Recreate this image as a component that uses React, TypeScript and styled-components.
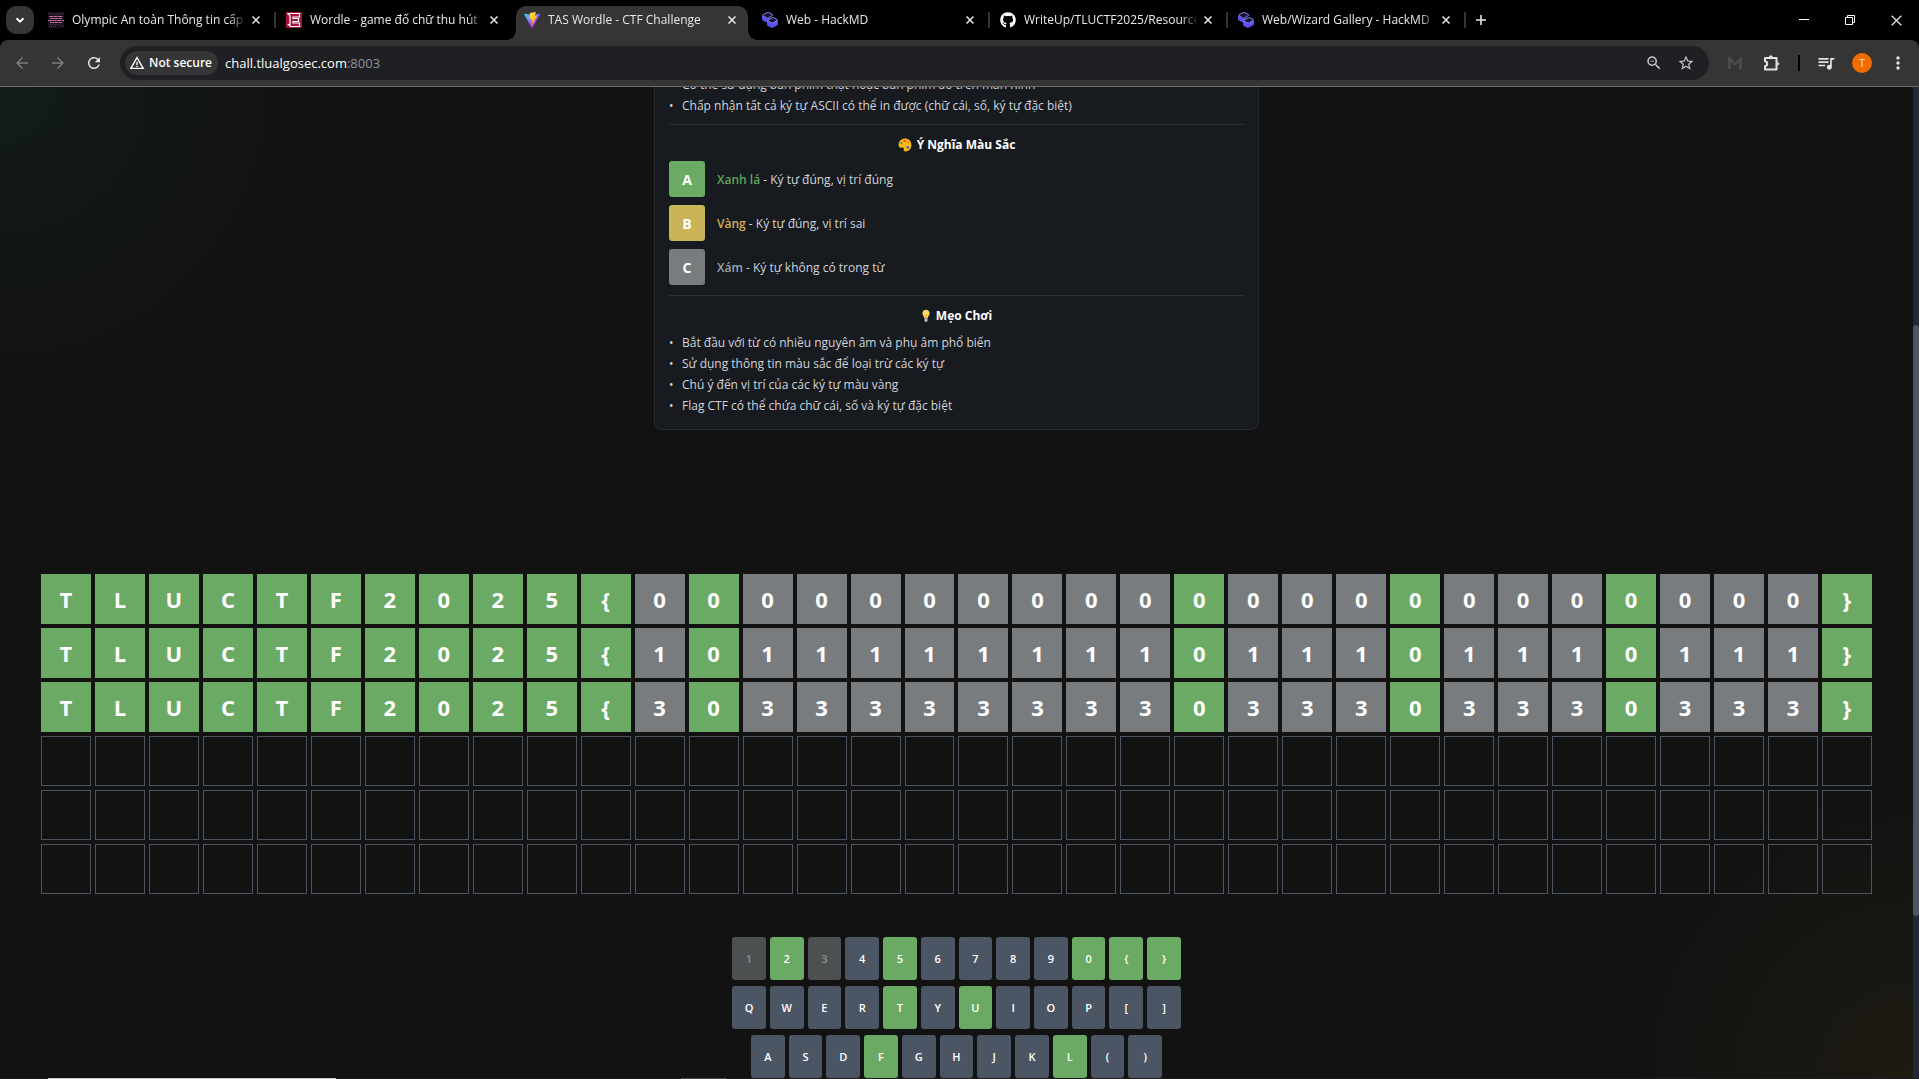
import React from "react";
import styled, { createGlobalStyle } from "styled-components";
import { FaGithub } from "react-icons/fa";
import { MdZoomOut, MdStarBorder, MdQueueMusic, MdMoreVert, MdArrowBack, MdArrowForward, MdRefresh, MdWarningAmber } from "react-icons/md";

const GlobalStyle = createGlobalStyle`
  * { box-sizing: border-box; }
  body { margin: 0; background: #121212; overflow: hidden; }
  button, input { font: inherit; color: inherit; border: 0; padding: 0; margin: 0; background: none; }
  ul { list-style: none; margin: 0; padding: 0; }
  svg { display: block; flex: none; }
`;

const Frame = styled.div`
  height: 100vh;
  display: flex;
  flex-direction: column;
  font-family: "Open Sans", "Noto Sans", sans-serif;
  font-size: 12px;
  line-height: 20px;
  color: #fff;
`;

/* ---------- Tab strip ---------- */
const TabStrip = styled.header`
  display: flex;
  height: 40px;
  flex: none;
  background: #000;
`;
const TabSearch = styled.button`
  width: 28px;
  height: 28px;
  margin: 6px 4px 0 6px;
  border-radius: 10px;
  background: #353535;
  display: grid;
  place-items: center;
`;
const TabList = styled.div`
  display: flex;
`;
const Tab = styled.div<{ $active?: boolean; $divider?: boolean }>`
  position: relative;
  width: 238px;
  height: 40px;
  padding: 0 14px 0 10px;
  display: flex;
  align-items: center;
  ${(p) => p.$active && `
    &::before {
      content: "";
      position: absolute;
      inset: 6px 4px 0 2px;
      border-radius: 10px 10px 0 0;
      background: #353535;
    }
    &::after {
      content: "";
      position: absolute;
      bottom: 0;
      left: -8px;
      right: -6px;
      height: 10px;
      background:
        radial-gradient(circle at 0 0, transparent 10px, #353535 10px) left / 10px 10px no-repeat,
        radial-gradient(circle at 100% 0, transparent 10px, #353535 10px) right / 10px 10px no-repeat;
    }
  `}
  ${(p) => p.$divider && `
    &::after {
      content: "";
      position: absolute;
      right: 0;
      top: 12px;
      width: 2px;
      height: 16px;
      background: #353535;
    }
  `}
  > * { position: relative; z-index: 1; }
`;
const TabTitle = styled.span`
  flex: 1;
  min-width: 0;
  margin: 0 4px 0 8px;
  overflow: hidden;
  white-space: nowrap;
  color: #e8e8e8;
  mask-image: linear-gradient(90deg, #000 158px, transparent 174px);
`;
const TabClose = styled.button`
  width: 12px;
  height: 12px;
  display: grid;
  place-items: center;
`;
const NewTab = styled.button`
  width: 30px;
  height: 40px;
  display: grid;
  place-items: center;
`;
const WindowButtons = styled.div`
  margin-left: auto;
  display: flex;
`;
const WindowButton = styled.button`
  width: 46px;
  height: 40px;
  display: grid;
  place-items: center;
`;

/* ---------- Toolbar ---------- */
const ToolbarBack = styled.div`
  flex: none;
  background: #000;
`;
const Toolbar = styled.nav`
  height: 47px;
  padding: 0 10px 1px 11px;
  display: flex;
  align-items: center;
  background: #353535;
  border-bottom: 1px solid #6b6b6b;
  border-radius: 8px 8px 0 0;
`;
const NavButtons = styled.div`
  display: flex;
  gap: 14px;
  margin-right: 15px;
`;
const IconButton = styled.button<{ $dim?: boolean }>`
  width: 22px;
  height: 22px;
  display: grid;
  place-items: center;
  color: ${(p) => (p.$dim ? "#7d7d7d" : "#e3e3e3")};
`;
const AddressBar = styled.div`
  flex: 1;
  height: 34px;
  padding: 0 12px 0 5px;
  border-radius: 17px;
  background: #1f2024;
  display: flex;
  align-items: center;
  font-size: 13px;
`;
const SecurityChip = styled.button`
  height: 24px;
  padding: 0 6px 0 4px;
  margin-right: 7px;
  border-radius: 12px;
  background: #353535;
  display: flex;
  align-items: center;
  gap: 4px;
  font-size: 12px;
  font-weight: 600;
`;
const UrlField = styled.label`
  flex: 1;
  display: flex;
`;
const UrlInput = styled.input`
  field-sizing: content;
  outline: 0;
  color: #fff;
`;
const UrlPort = styled.span`
  color: #8e9196;
`;
const BarIcons = styled.div`
  display: flex;
  gap: 10px;
`;
const BarIcon = styled(IconButton)`
  color: #c7c7c7;
`;
const ToolbarEnd = styled.div`
  display: flex;
  align-items: center;
  padding-left: 15px;
  gap: 15px;
`;
const ToolbarRule = styled.span`
  width: 2px;
  height: 16px;
  background: #000;
`;
const Avatar = styled.button`
  width: 20px;
  height: 20px;
  border-radius: 50%;
  background: #f26b00;
  color: #ffe0c8;
  font-size: 11px;
  display: grid;
  place-items: center;
`;

/* ---------- Page ---------- */
const Viewport = styled.div`
  flex: 1;
  min-height: 0;
  display: flex;
`;
const Page = styled.main`
  flex: 1;
  min-width: 0;
  overflow: hidden;
  background:
    radial-gradient(circle 300px at 0 0, rgba(34, 197, 94, 0.06), transparent),
    radial-gradient(circle 300px at 100% 100%, rgba(234, 179, 8, 0.05), transparent),
    #121212;
  display: flex;
  flex-direction: column;
  align-items: center;
`;
const ScrollTrack = styled.div`
  width: 6px;
  padding: 238px 0 162px;
  background: #1f2937;
`;
const ScrollThumb = styled.div`
  height: 100%;
  border-radius: 3px;
  background: #4b5563;
`;
const Guide = styled.section`
  width: 605px;
  flex: none;
  margin-top: -13px;
  padding: 0 14px 13px;
  border: 1px solid #242b36;
  border-top: 0;
  border-radius: 0 0 8px 8px;
  background: #171a1f;
  line-height: 21px;
  color: #d1d5db;
`;
const Bullets = styled.ul``;
const Bullet = styled.li`
  display: flex;
  &::before {
    content: "•";
    width: 13px;
    flex: none;
  }
`;
const GuideSection = styled.div<{ $gap: number }>`
  margin-top: ${(p) => p.$gap}px;
  padding-top: 10px;
  border-top: 1px solid #2a303b;
`;
const GuideTitle = styled.h3`
  margin: 0 0 6px;
  display: flex;
  align-items: center;
  justify-content: center;
  gap: 5px;
  font-size: 12px;
  font-weight: 700;
  line-height: 20px;
  color: #fff;
`;
const Legend = styled.div`
  display: grid;
  gap: 8px;
`;
const LegendRow = styled.div`
  display: flex;
  align-items: center;
  gap: 12px;
`;
const Swatch = styled.span<{ $color: string }>`
  width: 36px;
  height: 36px;
  border-radius: 3px;
  background: ${(p) => p.$color};
  color: #fff;
  font-size: 14px;
  font-weight: 700;
  display: grid;
  place-items: center;
`;
const LegendName = styled.span<{ $color: string }>`
  color: ${(p) => p.$color};
  font-weight: 600;
`;
const Board = styled.div`
  align-self: stretch;
  margin: 144px 41px 0;
  flex: none;
  display: grid;
  gap: 4px;
`;
const BoardRow = styled.div`
  display: flex;
  gap: 4px;
`;
const Tile = styled.div<{ $state: TileState }>`
  flex: 1;
  height: 50px;
  display: grid;
  place-items: center;
  font-size: 22px;
  font-weight: 700;
  line-height: 30px;
  ${(p) =>
    p.$state === "empty"
      ? "border: 1px solid #4b5563;"
      : `background: ${p.$state === "hit" ? "#6aaa64" : "#787c7e"};`}
`;
const Keyboard = styled.div`
  width: 449px;
  flex: none;
  margin-top: 43px;
  display: grid;
  gap: 6px;
`;
const KeyRow = styled.div`
  display: flex;
  justify-content: center;
  gap: 4px;
`;
const Key = styled.button<{ $state: KeyState }>`
  width: calc((100% - 44px) / 12);
  height: 43px;
  border-radius: 3px;
  font-size: 11px;
  font-weight: 600;
  background: ${(p) => ({ idle: "#4b5563", hit: "#6aaa64", miss: "#4d5050" })[p.$state]};
  color: ${(p) => (p.$state === "miss" ? "#8f8f8f" : "#fff")};
`;
const Taskbar = styled.footer`
  height: 1px;
  flex: none;
  padding-left: 48px;
  display: flex;
  gap: 345px;
  background: #1c1c1c;
`;
const TaskItem = styled.span<{ $active?: boolean }>`
  width: ${(p) => (p.$active ? 288 : 45)}px;
  background: ${(p) => (p.$active ? "#d0cdca" : "#4a4a4a")};
`;

type TileState = "hit" | "miss" | "empty";
type KeyState = "idle" | "hit" | "miss";

const OlympicIcon = () => (
  <svg width="16" height="16" viewBox="0 0 16 16">
    <rect width="16" height="16" fill="#17121b" />
    <path d="M1 1.500h4M6 2.500h5M12 1.500h3M2 12.500h3M7 12.500h4M12 13.500h3M3 14.500h5" stroke="#4d3a50" strokeDasharray="1 1" />
    <path d="M1 4.500h14M2 6.500h12M0 8.500h16M2 10.500h12" stroke="#c86aa6" strokeWidth="1.200" strokeDasharray="4 .5" />
  </svg>
);
const EIcon = () => (
  <svg width="16" height="16" viewBox="0 0 16 16">
    <rect width="16" height="16" rx="1" fill="#a3133b" />
    <path d="M2 1.500h11.500v3.500H7v1.500h5.500v3H7V11h6.500v3.500H4.500l-2-2h1.500V4z" fill="none" stroke="#fff" strokeWidth="1.200" />
  </svg>
);
const ViteIcon = () => (
  <svg width="16" height="16" viewBox="0 0 256 257">
    <defs>
      <linearGradient id="va" x1="0" x2=".58" y1=".08" y2=".79"><stop stopColor="#41D1FF" /><stop offset="1" stopColor="#BD34FE" /></linearGradient>
      <linearGradient id="vb" x1=".43" x2=".5" y1=".02" y2=".89"><stop stopColor="#FFEA83" /><stop offset=".08" stopColor="#FFDD35" /><stop offset="1" stopColor="#FFA800" /></linearGradient>
    </defs>
    <path fill="url(#va)" d="M255.153 37.938L134.897 252.976c-2.483 4.440-8.862 4.466-11.382.048L.875 37.958c-2.746-4.814 1.371-10.646 6.827-9.670l120.385 21.517a6.537 6.537 0 0 0 2.322-.004l117.867-21.483c5.438-.991 9.574 4.796 6.877 9.620z" />
    <path fill="url(#vb)" d="M185.432.063L96.440 17.501a3.268 3.268 0 0 0-2.634 3.014l-5.474 92.456a3.268 3.268 0 0 0 3.997 3.378l24.777-5.718c2.318-.535 4.413 1.507 3.936 3.838l-7.361 36.047c-.495 2.426 1.782 4.500 4.151 3.780l15.304-4.649c2.372-.720 4.652 1.360 4.150 3.788l-11.698 56.621c-.732 3.542 3.979 5.473 5.943 2.437l1.313-2.028 72.516-144.720c1.215-2.423-.880-5.186-3.540-4.672l-25.505 4.922c-2.396.462-4.435-1.770-3.759-4.114l16.646-57.705c.677-2.350-1.370-4.583-3.769-4.113z" />
  </svg>
);
const HackMdIcon = () => (
  <svg width="16" height="16" viewBox="0 0 16 16">
    <path d="M0 3.500v3.500q0 1 1 1.500l3.500 2 3-1.800V6L4.500 6.500zM5 8.800v4q0 .8.800 1.200l3.400 1.700q.8.300 1.500 0l4.500-2.500q.8-.5.800-1.300V8l-5.500 3z" fill="#5a50f5" />
    <path d="M1 2.700 5 .7q.9-.4 1.800 0l3.600 1.800q1 .5 0 1.100L6.300 5.900q-.8.400-1.600 0L1 3.900q-.9-.6 0-1.200zM6.200 8l4-2.200q.8-.4 1.600 0l3.200 1.600q1 .6 0 1.200l-3.800 2.200q-.8.400-1.600 0L6.200 9.200q-.9-.6 0-1.200z" fill="#15132e" stroke="#8a86ff" strokeWidth="1" />
  </svg>
);
const PuzzleIcon = () => (
  <svg width="18" height="18" viewBox="0 0 18 18" fill="none" stroke="currentColor" strokeWidth="2" strokeLinejoin="round">
    <path d="M2 4h11.500v11.500H2v-3.200c1.300-.2 2.200-1.200 2.200-2.500S3.300 7.500 2 7.300z" />
    <path d="M6 3a1.800 1.800 0 0 1 3.600 0zM14.500 8a1.800 1.800 0 0 1 0 3.600z" fill="currentColor" stroke="none" />
  </svg>
);
const PaletteIcon = () => (
  <svg width="14" height="14" viewBox="0 0 14 14">
    <path d="M7.200.6c3.500 0 6.200 2.700 6.200 6.300s-2.500 6.500-5.800 6.500c-1.700 0-2.300-.9-2-1.900.3-.9.300-1.700-.5-2-.8-.3-1.600.2-2.500.2C1.200 9.700.6 8.500.6 6.800.6 3.200 3.700.6 7.200.6z" fill="#fcb813" />
    <circle cx="3.300" cy="5" r="1.100" fill="#23a34a" />
    <circle cx="6.500" cy="2.900" r="1.100" fill="#e23b2e" />
    <circle cx="10.200" cy="4.400" r="1" fill="#f58220" />
    <circle cx="9.800" cy="9.300" r="1.300" fill="#2f62d9" />
  </svg>
);
const BulbIcon = () => (
  <svg width="10" height="14" viewBox="0 0 10 14">
    <path d="M5 .7c2.100 0 3.600 1.500 3.600 3.500S6.900 7.200 6.600 9.500H3.400C3.100 7.200 1.400 6.200 1.400 4.200S2.900.7 5 .7z" fill="#ffd766" />
    <path d="M3.500 9.500h3v2.300L5.700 13H4.300l-.8-1.200z" fill="#b9bec4" />
    <path d="M4.200 5.500 5 9l.8-3.500" fill="none" stroke="#f0a92c" strokeWidth=".6" />
  </svg>
);
const Cross = ({ size = 8, width = 1.5 }: { size?: number; width?: number }) => (
  <svg width={size} height={size} viewBox="0 0 8 8" stroke="#e8e8e8" strokeWidth={width}>
    <path d="M.5.5l7 7M7.500.5l-7 7" />
  </svg>
);

const tabs = [
  { title: "Olympic An toàn Thông tin cấp", icon: <OlympicIcon />, divider: true },
  { title: "Wordle - game đố chữ thu hút", icon: <EIcon /> },
  { title: "TAS Wordle - CTF Challenge", icon: <ViteIcon />, active: true },
  { title: "Web - HackMD", icon: <HackMdIcon />, divider: true },
  { title: "WriteUp/TLUCTF2025/Resource", icon: <FaGithub size={16} />, divider: true },
  { title: "Web/Wizard Gallery - HackMD", icon: <HackMdIcon />, divider: true },
];

const legend = [
  { letter: "A", color: "#6aaa64", text: "#5fa55a", name: "Xanh lá", note: "Ký tự đúng, vị trí đúng" },
  { letter: "B", color: "#c9b458", text: "#d3b155", name: "Vàng", note: "Ký tự đúng, vị trí sai" },
  { letter: "C", color: "#787c7e", text: "#9ca3af", name: "Xám", note: "Ký tự không có trong từ" },
];

const tips = [
  "Bắt đầu với từ có nhiều nguyên âm và phụ âm phổ biến",
  "Sử dụng thông tin màu sắc để loại trừ các ký tự",
  "Chú ý đến vị trí của các ký tự màu vàng",
  "Flag CTF có thể chứa chữ cái, số và ký tự đặc biệt",
];

const answerZeros = [12, 21, 25, 29];
const guesses = ["0", "1", "3"].map((fill) =>
  Array.from({ length: 34 }, (_, i): { char: string; state: TileState } => {
    if (i < 11) return { char: "TLUCTF2025{"[i], state: "hit" };
    if (i === 33) return { char: "}", state: "hit" };
    return answerZeros.includes(i) ? { char: "0", state: "hit" } : { char: fill, state: "miss" };
  })
);
const emptyRow = Array.from({ length: 34 }, (): { char: string; state: TileState } => ({ char: "", state: "empty" }));
const board = [...guesses, emptyRow, emptyRow, emptyRow];

const keyRows = ["1234567890{}", "QWERTYUIOP[]", "ASDFGHJKL()"];
const keyState = (k: string): KeyState => ("250{}TUFL".includes(k) ? "hit" : "13".includes(k) ? "miss" : "idle");

export default function App() {
  return (
    <Frame>
      <GlobalStyle />
      <TabStrip>
        <TabSearch aria-label="Search tabs">
          <svg width="10" height="10" viewBox="0 0 10 10" fill="none" stroke="#fff" strokeWidth="2"><path d="M1.500 3.200 5 6.700l3.500-3.500" /></svg>
        </TabSearch>
        <TabList>
          {tabs.map((t) => (
            <Tab key={t.title} $active={t.active} $divider={t.divider}>
              {t.icon}
              <TabTitle>{t.title}</TabTitle>
              <TabClose aria-label="Close tab"><Cross /></TabClose>
            </Tab>
          ))}
        </TabList>
        <NewTab aria-label="New tab">
          <svg width="12" height="12" viewBox="0 0 12 12" stroke="#e8e8e8" strokeWidth="1.600"><path d="M6 1v10M1 6h10" /></svg>
        </NewTab>
        <WindowButtons>
          <WindowButton aria-label="Minimize">
            <svg width="10" height="10" viewBox="0 0 10 10" stroke="#fff"><path d="M0 4.500h10" /></svg>
          </WindowButton>
          <WindowButton aria-label="Restore">
            <svg width="10" height="10" viewBox="0 0 10 10" fill="none" stroke="#fff"><path d="M.5 2.500h7v7h-7zM2.500 2.500v-2h7v7h-2" /></svg>
          </WindowButton>
          <WindowButton aria-label="Close"><Cross size={11} width={0.9} /></WindowButton>
        </WindowButtons>
      </TabStrip>
      <ToolbarBack>
        <Toolbar>
          <NavButtons>
            <IconButton $dim aria-label="Back"><MdArrowBack size={18} /></IconButton>
            <IconButton $dim aria-label="Forward"><MdArrowForward size={18} /></IconButton>
            <IconButton aria-label="Reload"><MdRefresh size={18} /></IconButton>
          </NavButtons>
          <AddressBar>
            <SecurityChip><MdWarningAmber size={16} />Not secure</SecurityChip>
            <UrlField>
              <UrlInput aria-label="Address" defaultValue="chall.tlualgosec.com" />
              <UrlPort>:8003</UrlPort>
            </UrlField>
            <BarIcons>
              <BarIcon aria-label="Zoom"><MdZoomOut size={18} /></BarIcon>
              <BarIcon aria-label="Bookmark"><MdStarBorder size={18} /></BarIcon>
            </BarIcons>
          </AddressBar>
          <ToolbarEnd>
            <IconButton aria-label="Extension">
              <svg width="16" height="14" viewBox="0 0 16 14" fill="#4b4b4b"><path d="M1 13V1h2l5 6 5-6h2v12h-3V6l-4 4-4-4v7z" /></svg>
            </IconButton>
            <IconButton aria-label="Extensions"><PuzzleIcon /></IconButton>
            <ToolbarRule />
            <IconButton aria-label="Media"><MdQueueMusic size={20} /></IconButton>
            <Avatar>T</Avatar>
            <IconButton aria-label="Menu"><MdMoreVert size={20} /></IconButton>
          </ToolbarEnd>
        </Toolbar>
      </ToolbarBack>
      <Viewport>
        <Page>
          <Guide>
            <Bullets>
              <Bullet>Có thể sử dụng bàn phím thật hoặc bàn phím ảo trên màn hình</Bullet>
              <Bullet>Chấp nhận tất cả ký tự ASCII có thể in được (chữ cái, số, ký tự đặc biệt)</Bullet>
            </Bullets>
            <GuideSection $gap={8}>
              <GuideTitle><PaletteIcon />Ý Nghĩa Màu Sắc</GuideTitle>
              <Legend>
                {legend.map((l) => (
                  <LegendRow key={l.letter}>
                    <Swatch $color={l.color}>{l.letter}</Swatch>
                    <span><LegendName $color={l.text}>{l.name}</LegendName> - {l.note}</span>
                  </LegendRow>
                ))}
              </Legend>
            </GuideSection>
            <GuideSection $gap={10}>
              <GuideTitle><BulbIcon />Mẹo Chơi</GuideTitle>
              <Bullets>{tips.map((t) => <Bullet key={t}>{t}</Bullet>)}</Bullets>
            </GuideSection>
          </Guide>
          <Board>
            {board.map((row, r) => (
              <BoardRow key={r}>
                {row.map((t, c) => <Tile key={c} $state={t.state}>{t.char}</Tile>)}
              </BoardRow>
            ))}
          </Board>
          <Keyboard>
            {keyRows.map((row) => (
              <KeyRow key={row}>
                {row.split("").map((k) => <Key key={k} $state={keyState(k)} disabled={keyState(k) === "miss"}>{k}</Key>)}
              </KeyRow>
            ))}
          </Keyboard>
        </Page>
        <ScrollTrack><ScrollThumb /></ScrollTrack>
      </Viewport>
      <Taskbar><TaskItem $active /><TaskItem /></Taskbar>
    </Frame>
  );
}
